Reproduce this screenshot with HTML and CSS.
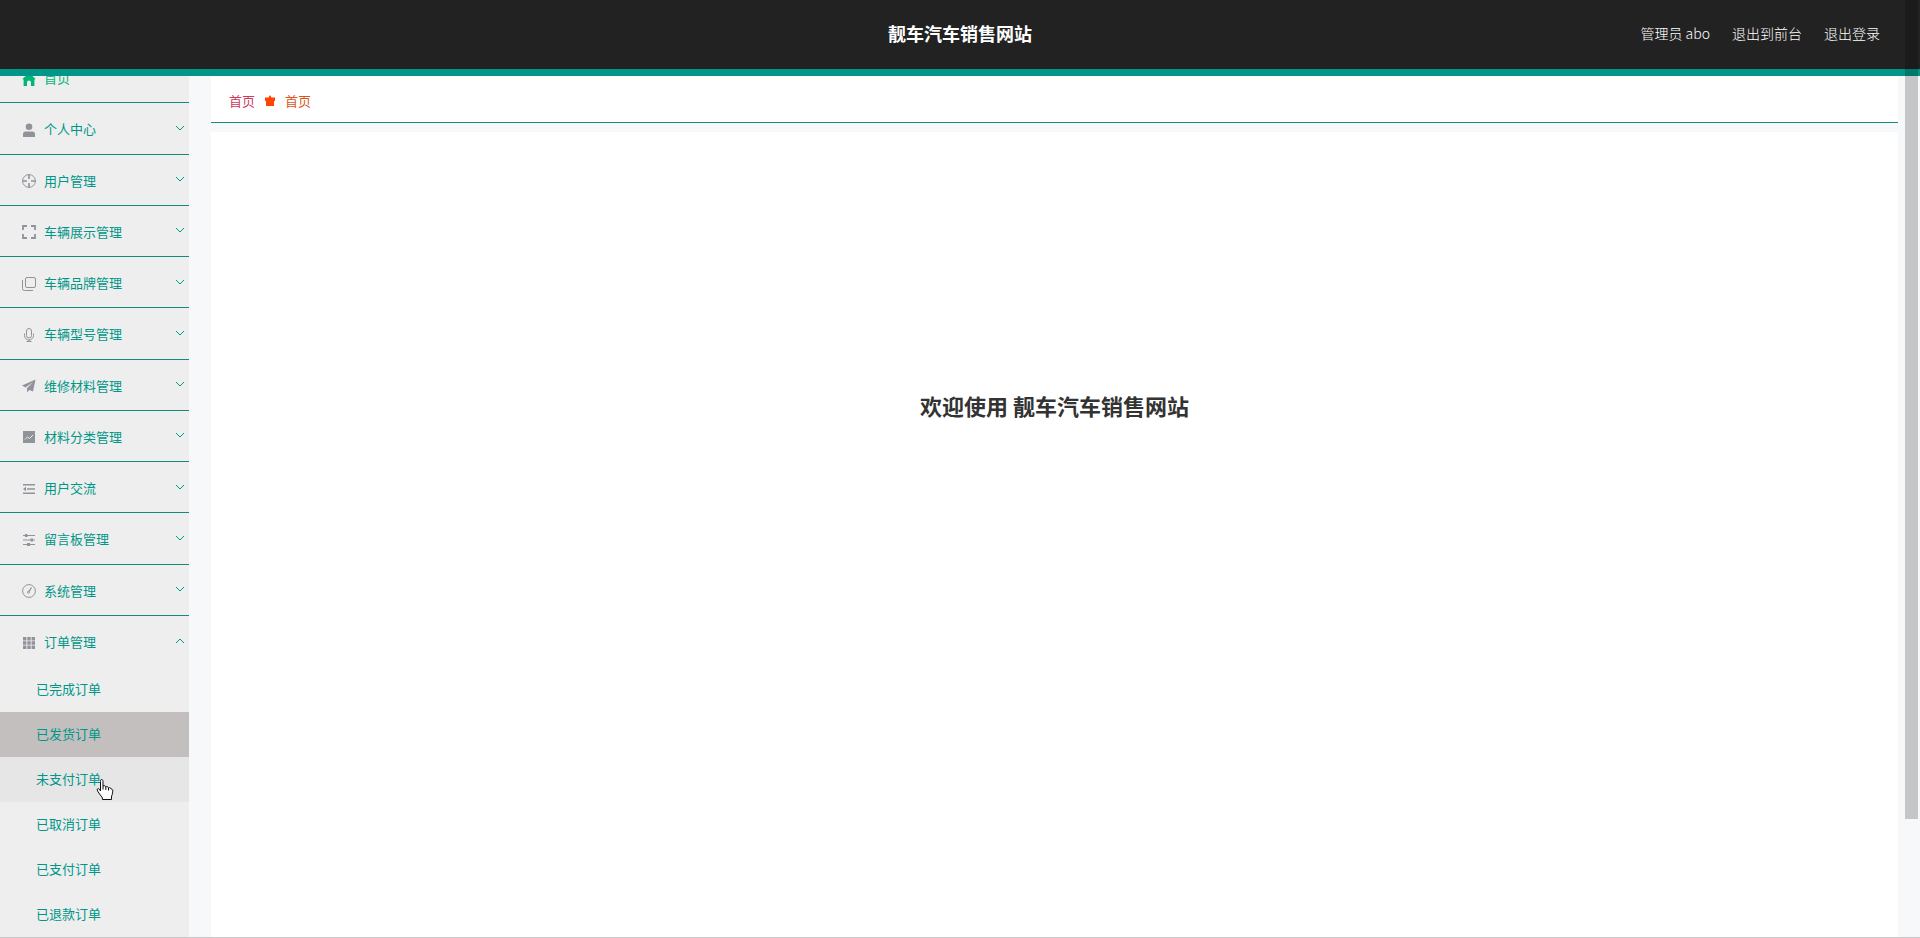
FILE: index.html
```
<!DOCTYPE html>
<html lang="zh-CN">
<head>
    <meta charset="UTF-8">
    <title>靓车汽车销售网站</title>
    <link rel="stylesheet" href="styles.css">
</head>
<body>
    <header class="navbar">
        <h1 class="title">靓车汽车销售网站</h1>
        <div class="user-menu">
            <span>管理员 abo</span>
            <a href="#">退出到前台</a>
            <a href="#">退出登录</a>
        </div>
    </header>

    <div class="container">
        <nav class="sidebar">
            <ul class="menu">
                <li class="home">
                    <a class="menu-title" href="#">
                        <svg class="icon" viewBox="0 0 14 14"><path d="M7 1 0.8 6.6V7.4H1.6V14H5V10.500a2 2 0 0 1 4 0V14h3.400V7.400h.8V6.600z"/></svg>
                        <span>首页</span>
                    </a>
                </li>
                <li>
                    <a class="menu-title" href="#">
                        <svg class="icon" viewBox="0 0 14 14"><circle cx="7" cy="3.8" r="3.3"/><path d="M1 14v-3q0-2.5 2.500-2.500h7q2.500 0 2.500 2.500v3z"/></svg>
                        <span>个人中心</span>
                        <svg class="arrow" viewBox="0 0 10 6"><path d="M1 1l4 4 4-4"/></svg>
                    </a>
                </li>
                <li>
                    <a class="menu-title" href="#">
                        <svg class="icon line" viewBox="0 0 14 14"><circle cx="7" cy="7" r="6.400"/><path d="M7 0.500v4.500M7 9v4.500M0.500 7H5M9 7h4.500" stroke-width="1.600"/></svg>
                        <span>用户管理</span>
                        <svg class="arrow" viewBox="0 0 10 6"><path d="M1 1l4 4 4-4"/></svg>
                    </a>
                </li>
                <li>
                    <a class="menu-title" href="#">
                        <svg class="icon line" viewBox="0 0 14 14"><path d="M1 5V1h4M9 1h4v4M13 9v4H9M5 13H1V9" stroke-width="1.800"/></svg>
                        <span>车辆展示管理</span>
                        <svg class="arrow" viewBox="0 0 10 6"><path d="M1 1l4 4 4-4"/></svg>
                    </a>
                </li>
                <li>
                    <a class="menu-title" href="#">
                        <svg class="icon line" viewBox="0 0 14 14"><rect x="3.500" y="0.500" width="10" height="10" rx="1.500"/><path d="M0.500 3v8.500q0 2 2 2H11"/></svg>
                        <span>车辆品牌管理</span>
                        <svg class="arrow" viewBox="0 0 10 6"><path d="M1 1l4 4 4-4"/></svg>
                    </a>
                </li>
                <li>
                    <a class="menu-title" href="#">
                        <svg class="icon line" viewBox="0 0 14 14"><rect x="4.500" y="0.500" width="5" height="9.500" rx="2.500"/><path d="M2.500 5.500V7.500a4.500 4.500 0 0 0 9 0V5.500M7 12v1.500M4.500 13.500h5"/></svg>
                        <span>车辆型号管理</span>
                        <svg class="arrow" viewBox="0 0 10 6"><path d="M1 1l4 4 4-4"/></svg>
                    </a>
                </li>
                <li>
                    <a class="menu-title" href="#">
                        <svg class="icon" viewBox="0 0 14 14"><path d="M13.500 0.500 0 6.500l3.500 2L11 3 5 9.300V13.500l2.200-2.600L11 12.500z"/></svg>
                        <span>维修材料管理</span>
                        <svg class="arrow" viewBox="0 0 10 6"><path d="M1 1l4 4 4-4"/></svg>
                    </a>
                </li>
                <li>
                    <a class="menu-title" href="#">
                        <svg class="icon" viewBox="0 0 14 14"><path d="M1 1h12v12H1z"/><path class="mark" d="M3 9.500l2.500-2.500 2 1.500L11 5"/></svg>
                        <span>材料分类管理</span>
                        <svg class="arrow" viewBox="0 0 10 6"><path d="M1 1l4 4 4-4"/></svg>
                    </a>
                </li>
                <li>
                    <a class="menu-title" href="#">
                        <svg class="icon" viewBox="0 0 14 14"><path d="M1 2h12v1.500H1zM5 6.200h8v1.500H5zM1 10.500h12V12H1zM4 4.800v4.400L1 7z"/></svg>
                        <span>用户交流</span>
                        <svg class="arrow" viewBox="0 0 10 6"><path d="M1 1l4 4 4-4"/></svg>
                    </a>
                </li>
                <li>
                    <a class="menu-title" href="#">
                        <svg class="icon" viewBox="0 0 14 14"><path d="M1 2h12v1H1zM1 6.500h12v1H1zM1 11h12v1H1zM3 1h2.500v3H3zM8.500 5.500H11v3H8.500zM5 10h3v3H5z"/></svg>
                        <span>留言板管理</span>
                        <svg class="arrow" viewBox="0 0 10 6"><path d="M1 1l4 4 4-4"/></svg>
                    </a>
                </li>
                <li>
                    <a class="menu-title" href="#">
                        <svg class="icon line" viewBox="0 0 14 14"><circle cx="7" cy="7" r="6.400"/><path d="M9.500 3.500 7 7.500" stroke-width="1.400"/><circle cx="6.500" cy="8.200" r="1"/></svg>
                        <span>系统管理</span>
                        <svg class="arrow" viewBox="0 0 10 6"><path d="M1 1l4 4 4-4"/></svg>
                    </a>
                </li>
                <li class="opened">
                    <a class="menu-title" href="#">
                        <svg class="icon" viewBox="0 0 14 14"><path d="M1 1h3.400v3.400H1zM5.300 1h3.400v3.400H5.300zM9.600 1H13v3.400H9.600zM1 5.300h3.400v3.400H1zM5.300 5.300h3.400v3.400H5.300zM9.600 5.300H13v3.400H9.600zM1 9.600h3.400V13H1zM5.300 9.600h3.400V13H5.300zM9.600 9.600H13V13H9.600z"/></svg>
                        <span>订单管理</span>
                        <svg class="arrow" viewBox="0 0 10 6"><path d="M1 5l4-4 4 4"/></svg>
                    </a>
                    <ul class="submenu">
                        <li><a href="#">已完成订单</a></li>
                        <li><a class="active" href="#">已发货订单</a></li>
                        <li>
                            <a class="hover" href="#">未支付订单</a>
                            <svg class="pointer" viewBox="0 0 18 23"><path d="M5.500 1.500c1.300 0 1.500 1 1.500 1.800V8c1.500-.8 2.600 0 2.800.8 1.300-.6 2.300 0 2.600 1 1.300-.5 2.400.2 2.600 1.200 1.200 0 1.800.7 1.800 1.800 0 3.200-1.300 4.700-1.300 6.200v2.500H6.500V20C5 17.500 2 14.500 1.200 12c-.4-1.300 1-2 2-.9L4.500 13V3.300c0-.8 0-1.800 1-1.800z"/><path d="M7 8v3.500M9.800 9v3M12.500 10v2.500"/></svg>
                        </li>
                        <li><a href="#">已取消订单</a></li>
                        <li><a href="#">已支付订单</a></li>
                        <li><a href="#">已退款订单</a></li>
                    </ul>
                </li>
            </ul>
        </nav>

        <main class="main">
            <div class="breadcrumb">
                <a href="#">首页</a>
                <svg class="separator" viewBox="0 0 10 11"><path d="M0 2.500h3.500L5 0l1.500 2.500H10V6H9v5H1V6H0z"/></svg>
                <span>首页</span>
            </div>
            <div class="content">
                <h2>欢迎使用 靓车汽车销售网站</h2>
            </div>
        </main>
    </div>
    <div class="scrollbar"></div>
</body>
</html>
```
FILE: styles.css
```
* {
    box-sizing: border-box;
}
body {
    display: flex;
    flex-direction: column;
    height: 100vh;
    margin: 0;
    background-color: #f6f8fa;
    font-family: "Noto Sans CJK SC", sans-serif;
    font-size: 13px;
    overflow: hidden;
}
a {
    color: inherit;
    text-decoration: none;
}
ul {
    margin: 0;
    padding: 0;
    list-style: none;
}

/* header */
.navbar {
    display: grid;
    grid-template-columns: 1fr auto 1fr;
    align-items: center;
    flex: none;
    height: 76px;
    padding: 0 40px 4px;
    background-color: #222;
    border-bottom: 7px solid #009688;
    color: #fff;
}
.title {
    grid-column: 2;
    margin: 0;
    font-size: 18px;
    line-height: 24px;
}
.user-menu {
    display: flex;
    justify-content: flex-end;
    gap: 22px;
    font-size: 14px;
    font-weight: 300;
    line-height: 20px;
}

.container {
    display: flex;
    flex: 1;
    min-height: 0;
    border-bottom: 1px solid #c8c8c8;
}

/* sidebar, scrolled down a little */
.sidebar {
    display: flex;
    flex-direction: column;
    flex: none;
    width: 189px;
    background-color: #eee;
    color: #009688;
    overflow: hidden;
}
.menu {
    display: flex;
    flex-direction: column;
    flex: 1;
    margin-top: -24px;
}
.menu > li {
    display: flex;
    flex-direction: column;
    flex: 1 0 51px;
    border-bottom: 1px solid #148a78;
}
.menu > .opened {
    flex-basis: 321px;
    border-bottom: none;
}
.menu-title {
    display: flex;
    align-items: center;
    flex: 1;
    padding: 1px 4px 0 22px;
}
.home {
    color: #00b578;
}
.icon {
    width: 14px;
    height: 14px;
    margin: 2px 8px 0 0;
    fill: #909399;
}
.home .icon {
    fill: #00b578;
}
.icon.line {
    fill: none;
    stroke: #909399;
}
.icon .mark {
    fill: none;
    stroke: #eee;
}
.arrow {
    width: 10px;
    height: 6px;
    margin: 0 0 2px auto;
    fill: none;
    stroke: #009688;
}
.submenu li {
    position: relative;
}
.submenu a {
    display: block;
    padding: 0 0 1px 36px;
    line-height: 44px;
}
.submenu .active {
    background-color: #c2bfbe;
}
.submenu .hover {
    background-color: #e7e6e7;
}
.pointer {
    position: absolute;
    top: 21px;
    left: 96px;
    width: 18px;
    height: 23px;
    fill: #fff;
    stroke: #111;
}

/* main */
.main {
    display: flex;
    flex-direction: column;
    flex: 1;
    gap: 9px;
    padding: 0 22px;
}
.breadcrumb {
    display: flex;
    align-items: center;
    gap: 10px;
    height: 47px;
    padding: 2px 18px 0;
    background-color: #fff;
    border-bottom: 1px solid #148a78;
    color: #d9561e;
}
.breadcrumb a {
    color: #cf3a5e;
}
.separator {
    width: 10px;
    height: 11px;
    fill: #ff4500;
}
.content {
    flex: 1;
    padding-top: 257px;
    background-color: #fff;
    text-align: center;
}
.content h2 {
    margin: 0;
    color: #333;
    font-size: 22px;
    line-height: 32px;
}

.scrollbar {
    position: absolute;
    top: 0;
    right: 2px;
    width: 13px;
    height: 819px;
    background-color: rgba(0, 0, 0, 0.2);
}
```
